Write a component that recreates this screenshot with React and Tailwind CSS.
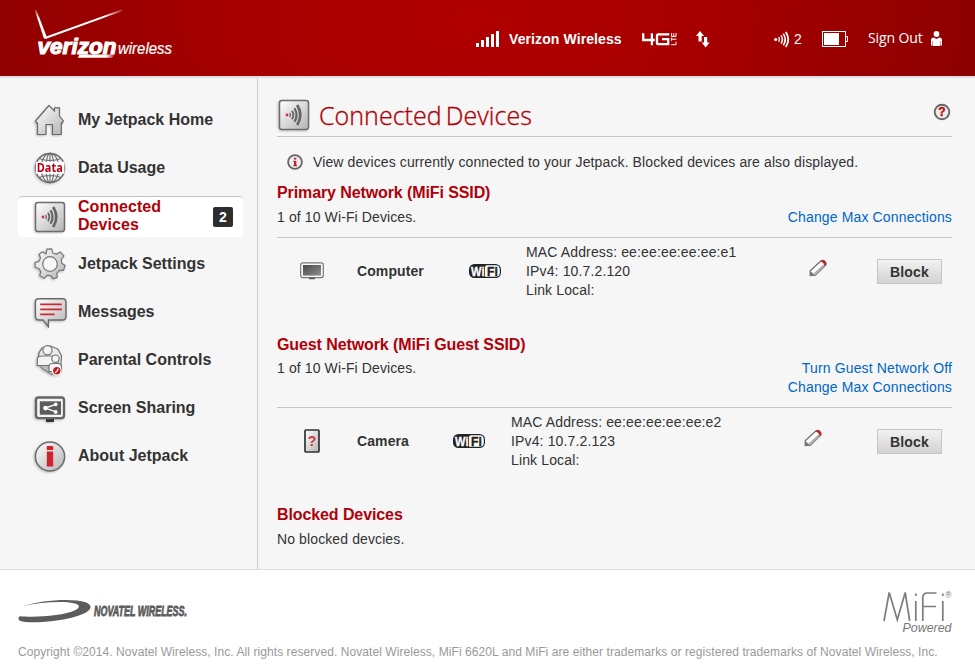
import React from "react";

const SANS = "font-['Liberation_Sans',Arial,sans-serif]";

function Defs() {
  return (
    <svg width="0" height="0" className="absolute">
      <defs>
        <linearGradient id="steel" x1="0" y1="0" x2="1" y2="1">
          <stop offset="0" stopColor="#ffffff" />
          <stop offset="1" stopColor="#b4b4b4" />
        </linearGradient>
        <linearGradient id="dark" x1="0" y1="0" x2="1" y2="1">
          <stop offset="0" stopColor="#484848" />
          <stop offset="1" stopColor="#909090" />
        </linearGradient>
        <linearGradient id="fadeL" x1="0" y1="0" x2="0" y2="1">
          <stop offset="0" stopColor="#fff" stopOpacity="0.2" />
          <stop offset="0.3" stopColor="#fff" />
        </linearGradient>
        <linearGradient id="fadeR" x1="0" y1="0" x2="1" y2="0">
          <stop offset="0.75" stopColor="#fff" />
          <stop offset="1" stopColor="#fff" stopOpacity="0.1" />
        </linearGradient>
      </defs>
    </svg>
  );
}

function VerizonLogo() {
  return (
    <svg width="144" height="54" viewBox="32 7 144 54">
      <path d="M34.5 9.5 L36.6 10.5 L47 37.5 L45.5 39 L43.8 38.2 Z" fill="url(#fadeL)" />
      <path d="M44.8 37 L120 10 L124 9.8 L120 12 L45.5 39 Z" fill="url(#fadeR)" />
      <text x="37.5" y="53.6" textLength="79" lengthAdjust="spacingAndGlyphs" fontFamily="Liberation Sans" fontWeight="bold" fontStyle="italic" fontSize="21.5" fill="#fff" stroke="#fff" strokeWidth="1.1">verizon</text>
      <path d="M79.5 54.6 L115 54.6 L112 57.8 L77.8 57.8 Z" fill="url(#fadeR)" />
      <text x="118" y="53.5" textLength="54" lengthAdjust="spacingAndGlyphs" fontFamily="Liberation Sans" fontStyle="italic" fontSize="17" fill="#fff" stroke="#fff" strokeWidth="0.2">wireless</text>
    </svg>
  );
}

function SignalBars() {
  return (
    <svg width="24" height="16" viewBox="0 0 24 16" fill="#fff">
      <rect x="0" y="12" width="3" height="4" />
      <rect x="5" y="9" width="3" height="7" />
      <rect x="10" y="6" width="3" height="10" />
      <rect x="15" y="3" width="3" height="13" />
      <rect x="20" y="0" width="3" height="16" />
    </svg>
  );
}

function LteIcon() {
  return (
    <svg width="35" height="13" viewBox="0 0 35 13" fill="none" stroke="#fff">
      <path d="M1.2 .3 V7 H12.8 M9.9 .3 V12.3" strokeWidth="2.3" />
      <path d="M27.3 1.4 H16.4 Q15 1.4 15 2.8 V9.7 Q15 11.1 16.4 11.1 H26.2 V6.2 H20" strokeWidth="2.3" />
      <path d="M29.6 0 V3.5 H34 V0 M31.8 .3 V3.5 M29.6 4.6 V7.8 M29.6 6.2 H34.4 M29.2 11.7 H34 V8.8" strokeWidth="1" />
    </svg>
  );
}

function TransferIcon() {
  return (
    <svg width="14" height="17" viewBox="0 0 14 17" fill="#fff">
      <path d="M4 0 L8 5 H5.7 V10.5 H2.5 V5 H0 Z" />
      <path d="M9.6 16.5 L5.8 11.5 H8 V6 H11.2 V11.5 H13.6 Z" />
    </svg>
  );
}

function HeaderWaves() {
  return (
    <svg width="16" height="17" viewBox="0 0 16 17" fill="none" stroke="#fff">
      <circle cx="1.7" cy="8.5" r="1.6" fill="#fff" stroke="none" />
      <path d="M4.6 6.2 Q6.3 8.5 4.6 10.8" strokeWidth="1.2" />
      <path d="M7 4.4 Q9.8 8.5 7 12.6" strokeWidth="1.5" />
      <path d="M9.3 2.6 Q13.2 8.5 9.3 14.4" strokeWidth="1.6" />
      <path d="M11.8 1 Q16.7 8.5 11.8 16" strokeWidth="1.8" />
    </svg>
  );
}

function Battery() {
  return (
    <svg width="27" height="16" viewBox="0 0 27 16">
      <rect x=".5" y=".5" width="23" height="15" fill="none" stroke="#fff" />
      <rect x="2" y="2" width="15" height="12" fill="#fff" />
      <path d="M24 5.5 H25.5 V10.5 H24" fill="none" stroke="#fff" />
    </svg>
  );
}

function Person() {
  return (
    <svg width="11" height="16" viewBox="0 0 11 16" fill="#fff">
      <circle cx="5.5" cy="3" r="2.9" />
      <path d="M0 9.5 Q0 6.8 2.6 6.6 L5.5 8 L8.4 6.6 Q11 6.8 11 9.5 V14.4 H9.6 V10 H9.2 V15 H1.8 V10 H1.4 V14.4 H0 Z" />
    </svg>
  );
}

const iconClass = "shrink-0 drop-shadow-[-1px_1px_1px_rgba(0,0,0,0.22)]";

function HomeIcon() {
  return (
    <svg width="32" height="32" viewBox="0 0 32 32" className={iconClass} fill="url(#steel)" stroke="#686868" strokeWidth="1.2" strokeLinejoin="round">
      <path d="M1.5 17 L15 1.5 L20.5 7.2 V3.8 H25.5 V12 L29.5 17 L28 19.3 L27.3 18.8 V30.5 H18.5 V20.5 H12 V30.5 H3.5 V18.8 L2.5 19.3 Z" />
    </svg>
  );
}

function DataIcon() {
  return (
    <svg width="32" height="32" viewBox="0 0 32 32" className={iconClass}>
      <g fill="none" stroke="#6b6b6b" strokeWidth="1.1">
        <circle cx="16" cy="16" r="14.6" fill="#f4f4f4" strokeWidth="1.5" />
        <ellipse cx="16" cy="16" rx="9" ry="14.6" />
        <ellipse cx="16" cy="16" rx="4" ry="14.6" />
        <path d="M16 1.5 V30.5 M5 6.5 Q16 10.5 27 6.5 M5 25.5 Q16 21.5 27 25.5" />
      </g>
      <rect x="1.8" y="9.8" width="28.6" height="12" fill="#fff" />
      <text x="2.8" y="20" textLength="26" lengthAdjust="spacingAndGlyphs" fontFamily="Open Sans" fontWeight="bold" fontSize="11.5" fill="#b80010">Data</text>
    </svg>
  );
}

function WavesTile() {
  return (
    <svg width="32" height="32" viewBox="0 0 32 32" className={iconClass} fill="none">
      <rect x="1.5" y="1.5" width="29" height="29" rx="2.4" fill="url(#steel)" stroke="#6d6d6d" strokeWidth="1.5" />
      <circle cx="9" cy="16" r="1.4" fill="#dd2940" />
      <g stroke="#646464">
        <path d="M11.7 13.8 Q13.2 16 11.7 18.2" strokeWidth="1.3" />
        <path d="M14 11.8 Q16.6 16 14 20.2" strokeWidth="1.8" />
        <path d="M16.5 9.2 Q20.6 16 16.5 22.8" strokeWidth="2.2" />
        <path d="M19.2 6 Q25.4 16 19.2 26" strokeWidth="2.7" />
      </g>
    </svg>
  );
}

function GearIcon() {
  return (
    <svg width="32" height="32" viewBox="0 0 32 32" className={iconClass} stroke="#777" strokeWidth="1.2" strokeLinejoin="round">
      <path d="M14 1 L18.8 1 L19.5 5 L23 6.8 L27.2 4.8 L30.5 8.8 L27.5 12.3 L27.8 16 L31 18.6 L29 23.2 L25 23 L22 26 L22.5 29.6 L18.2 31 L15.8 27.5 L12.2 27.2 L9.2 29.8 L5 27 L6.2 23.2 L4.8 20 L1 18.2 L1.2 13.4 L5.2 12.6 L7 9.4 L5.8 5.6 L9.6 3.2 L12.6 5.8 Z" transform="rotate(-4 16 16)" fill="url(#steel)" />
      <circle cx="16" cy="16" r="7.3" fill="#f6f6f6" />
    </svg>
  );
}

function MessageIcon() {
  return (
    <svg width="34" height="32" viewBox="0 -1 34 32" className={iconClass}>
      <path d="M5 1.7 H28.5 Q32 1.7 32 5.2 V19.2 Q32 22.9 28.5 22.9 H14.5 L14.3 29.5 L9 22.9 H5 Q1.4 22.9 1.4 19.2 V5.2 Q1.4 1.7 5 1.7 Z" fill="url(#steel)" stroke="#6b6b6b" strokeWidth="1.5" />
      <path d="M6.2 7.3 H27.8 M6.2 12.4 H27.8 M6.2 17.4 H20.6" stroke="#c92a35" strokeWidth="1.8" />
    </svg>
  );
}

function ParentalIcon() {
  return (
    <svg width="32" height="32" viewBox="0 0 32 32" className={iconClass} fill="#f4f4f4" stroke="#747474" strokeWidth="1.2">
      <path d="M8 4 L16 1.8 L24 5.2 L27.5 12 L26.5 26 L18 30.5 L9 25 L4 20 L5 9 Z" fill="#ececec" />
      <path d="M4.5 21 L18 30.3 V21 H4.5 Z" fill="#b8b8b8" stroke="none" />
      <circle cx="13.5" cy="6.2" r="4.6" />
      <path d="M3.3 21.5 V15.5 Q3.3 12 7.5 12 H20 Q24 12 24 16 V21.5 Z" />
      <circle cx="21.5" cy="14.7" r="3.7" />
      <path d="M15 27.5 V22.5 Q15 19.5 18 19.5 H24.5 Q27.5 19.5 27.5 22.5 V27.5 Z" />
      <circle cx="22.8" cy="26.7" r="4.3" fill="#c31522" stroke="#fff" />
      <path d="M22.8 27.5 L24.4 24.6 M22.8 27.2 L21.2 28.9" stroke="#fff" />
    </svg>
  );
}

function ScreenIcon() {
  return (
    <svg width="32" height="30" viewBox="0 -1.5 32 30" className={iconClass}>
      <path d="M12 23 H20 V27.5 H12 Z" fill="#333" />
      <rect x="2" y="3" width="28" height="20.6" rx="2.5" fill="#f5f5f5" stroke="#666" strokeWidth="2.4" />
      <rect x="5.8" y="6.8" width="21.2" height="13.4" fill="#5c5c5c" />
      <g fill="#fff" stroke="#fff" strokeWidth="1.4">
        <path d="M21.7 9.8 L11.5 13.6 L21.7 17.4" fill="none" />
        <circle cx="11.5" cy="13.6" r="1.6" />
        <circle cx="21.7" cy="9.8" r="1.2" />
        <circle cx="21.7" cy="17.4" r="1.2" />
      </g>
    </svg>
  );
}

function AboutIcon() {
  return (
    <svg width="32" height="32" viewBox="0 -1 32 32" className={iconClass}>
      <circle cx="16" cy="15.5" r="14.6" fill="url(#steel)" stroke="#6b6b6b" strokeWidth="1.5" />
      <path d="M12.8 5 H19.2 V9 H12.8 Z M12.8 10.6 H19.2 V25.6 H12.8 Z" fill="#cf242b" />
    </svg>
  );
}

function HelpIcon() {
  return (
    <svg width="18" height="18" viewBox="0 0 18 18">
      <circle cx="9" cy="9" r="7.3" fill="#ececec" stroke="#666" strokeWidth="1.9" />
      <text x="9" y="13.2" textAnchor="middle" fontFamily="Liberation Sans" fontWeight="bold" fontSize="12" fill="#bb1020" stroke="#bb1020" strokeWidth=".4">?</text>
    </svg>
  );
}

function InfoIcon() {
  return (
    <svg width="16" height="16" viewBox="0 0 16 16">
      <circle cx="8" cy="8" r="6.9" fill="#eeeeee" stroke="#666" strokeWidth="1.8" />
      <path d="M6.9 3.7 H9.3 V5.6 H6.9 Z M6.4 6.7 H9.3 V11 H10 V12.2 H6.4 V11 H7 V8 H6.4 Z" fill="#c51d30" />
    </svg>
  );
}

function ComputerIcon() {
  return (
    <svg width="24" height="18" viewBox="0 0 24 18">
      <path d="M9 15 H15 V17.2 H9 Z" fill="#444" />
      <rect x=".7" y=".8" width="22.6" height="14.8" rx="2" fill="#fafafa" stroke="#777" strokeWidth="1.2" />
      <rect x="3" y="3" width="18" height="10.6" fill="url(#dark)" />
    </svg>
  );
}

function UnknownDevice() {
  return (
    <svg width="16" height="24" viewBox="0 0 16 24">
      <rect x="1" y="1" width="14" height="22" rx="1" fill="url(#steel)" stroke="#333" strokeWidth="1.7" />
      <text x="8" y="17" textAnchor="middle" fontFamily="Liberation Sans" fontWeight="bold" fontSize="14" fill="#d03348">?</text>
    </svg>
  );
}

function WifiBadge() {
  return (
    <svg width="32" height="14" viewBox="0 0 32 14">
      <rect x="0" y="0" width="32" height="14" rx="5.5" fill="#222" />
      <path d="M18 1.2 H26.5 Q30.8 1.2 30.8 5.5 V8.5 Q30.8 12.8 26.5 12.8 H16 V3.3 Q16 1.2 18 1.2 Z" fill="#fff" />
      <text x="2" y="11.6" textLength="13.6" lengthAdjust="spacingAndGlyphs" fontFamily="Liberation Sans" fontWeight="bold" fontSize="12.6" fill="#fff" stroke="#fff" strokeWidth=".3">Wi</text>
      <text x="18" y="11.6" textLength="11" lengthAdjust="spacingAndGlyphs" fontFamily="Liberation Sans" fontWeight="bold" fontSize="12.6" fill="#222" stroke="#222" strokeWidth=".4">Fi</text>
    </svg>
  );
}

function Pencil() {
  return (
    <svg width="19" height="18" viewBox="0 0 19 18">
      <path d="M1.2 11.8 L11.5 2.2 Q13.5 .6 15.8 2.3 Q18 4.5 16.3 6.7 L6.5 16.2 L1.2 16.6 Z" fill="#fff" stroke="#6e6e6e" strokeWidth="1.2" />
      <path d="M2 16.2 L6.8 15.8 L16 7 L14.3 5.4 L5.6 13.6 Z" fill="#b0b0b0" />
      <path d="M1 16.8 V12.3 L3 13.5 L5.8 16.4 Z" fill="#777" />
      <path d="M11.3 2.3 Q14 .2 16.2 2.2 Q18.3 4.5 16.4 6.7 L15.6 7.3 Q15.3 4 11.3 2.3 Z" fill="#c32330" />
    </svg>
  );
}

function NovatelLogo() {
  return (
    <svg width="180" height="26" viewBox="-0.5 0 180 26">
      <path d="M5.5 7 C22 1 54 -1 67 3.2 C77 7 72 14 54 18.5 C38 23 9 24.8 2 22 C-1 20.5 0 17.8 1.4 17.2 C17 18.5 45 17 57 11 C66 6 56 3 42 3 C28 3 16 4.5 5.5 7 Z" fill="#5c5c5c" />
      <text x="75.5" y="17" textLength="93" lengthAdjust="spacingAndGlyphs" fontFamily="Liberation Sans" fontWeight="bold" fontStyle="italic" fontSize="14" fill="#5c5c5c" stroke="#5c5c5c" strokeWidth="0.8">NOVATEL WIRELESS.</text>
    </svg>
  );
}

function MifiLogo() {
  return (
    <svg width="72" height="44" viewBox="0 0 72 44">
      <g fill="none" stroke="#7c7c7c" strokeWidth="1.7">
        <path d="M4 30 L9.2 1.5 L17.3 28.8 L25.2 1.5 L29.7 30" />
        <path d="M35.8 10 V30 M35.8 2.5 V5" />
        <path d="M42.8 30 V6.5 Q42.8 2 47.5 2 H56.5 M42.8 15.5 H56" />
        <path d="M62.8 10 V30 M62.8 2.5 V5" />
      </g>
      <text x="65.2" y="6.5" fontFamily="Liberation Sans" fontSize="8.5" fill="#777">®</text>
      <text x="22.5" y="41" textLength="49" lengthAdjust="spacingAndGlyphs" fontFamily="Liberation Sans" fontStyle="italic" fontSize="12.2" fill="#777">Powered</text>
    </svg>
  );
}

const NAV = [
  { label: "My Jetpack Home", Icon: HomeIcon },
  { label: "Data Usage", Icon: DataIcon },
  { label: "Connected Devices", Icon: WavesTile, active: true, count: 2 },
  { label: "Jetpack Settings", Icon: GearIcon },
  { label: "Messages", Icon: MessageIcon },
  { label: "Parental Controls", Icon: ParentalIcon },
  { label: "Screen Sharing", Icon: ScreenIcon },
  { label: "About Jetpack", Icon: AboutIcon },
];

function NavItem({ label, Icon, active, count }) {
  const icon = <div className="flex w-11 shrink-0 items-center"><Icon /></div>;
  if (active) {
    return (
      <li className="flex h-12 items-center">
        <div className="flex h-[41px] w-[225px] items-center rounded border-t border-[#c4c4c4] bg-white pl-4 pr-2.5">
          {icon}
          <span className="-mt-0.5 w-[100px] text-base leading-[18px] font-bold tracking-[0.05px] text-[#b00009]">{label}</span>
          <span className="ml-auto flex h-5 w-5 items-center justify-center rounded-xs bg-[#2e2e2e] text-sm font-bold text-white">{count}</span>
        </div>
      </li>
    );
  }
  return (
    <li className="flex h-12 items-center pl-4">
      {icon}
      <span className="text-base font-bold text-[#333]">{label}</span>
    </li>
  );
}

function DeviceRow({ icon, name, lines, cols }) {
  return (
    <div className={"grid h-24 items-start " + cols}>
      <div className="flex h-[66px] w-[70px] items-center justify-center">{icon}</div>
      <div className="flex h-[65px] items-center text-sm font-bold tracking-[0.1px]">{name}</div>
      <div className="flex h-[66px] items-center"><WifiBadge /></div>
      <div className="pt-[5px] leading-[19px] tracking-[0.14px]">
        {lines.map((l) => <div key={l}>{l}</div>)}
      </div>
      <div className="flex h-[60px] items-center"><Pencil /></div>
      <button className="mt-[21px] h-[25px] w-[65px] border border-[#c6c6c6] bg-linear-to-b from-[#f2f2f2] to-[#d2d2d2] text-sm font-bold tracking-[0.2px] text-[#333]">Block</button>
    </div>
  );
}

function Heading({ children }) {
  return <h2 className="h-5 text-base leading-[22px] font-bold tracking-[-0.1px] text-[#b00009]">{children}</h2>;
}

export default function App() {
  return (
    <div className={"flex h-[669px] w-[975px] flex-col overflow-hidden bg-white text-sm text-[#333] " + SANS}>
      <Defs />
      <header className="flex h-[76px] shrink-0 items-start bg-[radial-gradient(ellipse_620px_360px_at_470px_20px,#b00000_0%,#a60000_40%,#820000_100%)] pt-[7px] pl-8 text-white">
        <VerizonLogo />
        <div className="ml-[300px] flex h-16 items-center text-sm">
          <SignalBars />
          <span className="ml-[9px] w-[133px] font-bold tracking-[0.1px]">Verizon Wireless</span>
          <LteIcon />
          <span className="ml-[19px]"><TransferIcon /></span>
          <span className="ml-[64px]"><HeaderWaves /></span>
          <span className="ml-1 w-7">2</span>
          <Battery />
          <span className="-mt-0.5 ml-[19px] w-[63px] font-['Open_Sans',sans-serif] text-[14px] tracking-[-0.1px] whitespace-nowrap">Sign Out</span>
          <Person />
        </div>
      </header>
      <div className="flex h-[494px] shrink-0 border-t-2 border-b border-t-[#dedede] border-b-[#dcdcdc] bg-[#f6f6f6]">
        <nav className="w-[258px] shrink-0 border-r border-[#cfcfcf] pt-[18px] pl-[18px]">
          <ul>{NAV.map((n) => <NavItem key={n.label} {...n} />)}</ul>
        </nav>
        <main className="w-[694px] pl-[19px] tracking-[0.11px]">
          <div className="flex h-[59px] items-center border-b border-[#c6c6c6] pt-[15px]">
            <span className="ml-px"><WavesTile /></span>
            <h1 className="ml-[9px] font-['Open_Sans',sans-serif] text-[25px] leading-8 font-light tracking-[0.05px] text-[#b00009] [-webkit-text-stroke:0.35px_#b00009] [word-spacing:-2.5px]">Connected Devices</h1>
            <span className="-mt-1.5 mr-px ml-auto"><HelpIcon /></span>
          </div>
          <div className="flex h-[45px] items-start pt-[15px] pl-2.5 leading-5">
            <span className="mt-0.5 mr-[10px]"><InfoIcon /></span>View devices currently connected to your Jetpack. Blocked devices are also displayed.
          </div>
          <Heading>Primary Network (MiFi SSID)</Heading>
          <div className="flex h-9 justify-between border-b border-[#c6c6c6] pt-[6px] leading-[19px]">
            <span>1 of 10 Wi-Fi Devices.</span>
            <a className="tracking-[0.14px] text-[#0066c6]">Change Max Connections</a>
          </div>
          <DeviceRow
            icon={<ComputerIcon />}
            name="Computer"
            lines={["MAC Address: ee:ee:ee:ee:ee:e1", "IPv4: 10.7.2.120", "Link Local:"]}
            cols="grid-cols-[80px_112px_57px_283px_68px_65px]"
          />
          <Heading>Guest Network (MiFi Guest SSID)</Heading>
          <div className="flex h-[54px] justify-between border-b border-[#c6c6c6] pt-[5px] leading-[19px]">
            <span>1 of 10 Wi-Fi Devices.</span>
            <div className="flex flex-col items-end tracking-[0.14px] text-[#0066c6]">
              <a>Turn Guest Network Off</a>
              <a>Change Max Connections</a>
            </div>
          </div>
          <DeviceRow
            icon={<UnknownDevice />}
            name="Camera"
            lines={["MAC Address: ee:ee:ee:ee:ee:e2", "IPv4: 10.7.2.123", "Link Local:"]}
            cols="grid-cols-[80px_96px_58px_293px_73px_65px]"
          />
          <Heading>Blocked Devices</Heading>
          <div className="pt-[6px] leading-[19px]">No blocked devcies.</div>
        </main>
      </div>
      <footer className="pl-[18px] text-[#999]">
        <div className="flex h-[72px] items-start justify-between pr-[23px]">
          <span className="mt-[29px]"><NovatelLogo /></span>
          <span className="mt-[21px]"><MifiLogo /></span>
        </div>
        <p className="text-xs leading-5 tracking-[0.072px] whitespace-nowrap">Copyright ©2014. Novatel Wireless, Inc. All rights reserved. Novatel Wireless, MiFi 6620L and MiFi are either trademarks or registered trademarks of Novatel Wireless, Inc.</p>
      </footer>
    </div>
  );
}
